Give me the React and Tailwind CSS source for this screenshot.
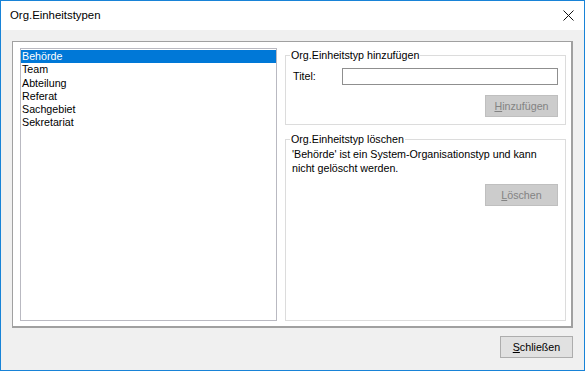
import React from "react";

const items = ["Behörde", "Team", "Abteilung", "Referat", "Sachgebiet", "Sekretariat"];

const Mnemonic = ({ first, rest }) => (
  <span>
    <u className="underline underline-offset-[1px]">{first}</u>
    {rest}
  </span>
);

const DisabledButton = ({ first, rest }) => (
  <button
    disabled
    className="w-[73px] h-[22px] bg-[#cccccc] border border-[#bfbfbf] text-[#838383] text-[10.7px] leading-none flex items-center justify-center"
  >
    <Mnemonic first={first} rest={rest} />
  </button>
);

export default function App() {
  return (
    <div className="w-[585px] h-[371px] border border-[#1883d7] bg-[#f0f0f0] flex flex-col font-['Liberation_Sans',Arial,sans-serif] text-black">
      {/* title bar */}
      <div className="h-[29px] bg-white flex items-center justify-between pl-[9px] pr-[9px] shrink-0">
        <span className="text-[11.4px]">Org.Einheitstypen</span>
        <svg width="11" height="11" viewBox="0 0 11 11" className="mr-[1px]">
          <path d="M0.5 0.5 L10.5 10.5 M10.5 0.5 L0.5 10.5" stroke="#111" strokeWidth="1" />
        </svg>
      </div>

      {/* body */}
      <div className="flex-1 flex flex-col px-[11px] pt-[11px] text-[10.7px]">
        <div className="w-[561px] h-[287px] bg-white border-t border-l border-r-2 border-b-2 border-[#a0a0a0] flex pt-[6px] pl-[7px] gap-[8px]">
          {/* list */}
          <div className="w-[257px] h-[273px] border border-[#b9b9c1] pt-[1px] shrink-0">
            {items.map((it, i) => (
              <div
                key={it}
                className={
                  "leading-[13.3px] h-[13.3px] pl-[1px] " +
                  (i === 0 ? "bg-[#0078d7] text-white" : "")
                }
              >
                {it}
              </div>
            ))}
          </div>

          {/* right column */}
          <div className="w-[281px] flex flex-col">
            <fieldset className="h-[77px] border border-[#dcdcdc] flex flex-col">
              <legend className="ml-[4px] px-[1px] leading-[14px]">Org.Einheitstyp hinzufügen</legend>
              <div className="flex items-center pl-[7px] mt-[6px]">
                <span className="w-[49px]">Titel:</span>
                <div className="w-[216px] h-[17px] border border-[#8f8f8f] bg-white" />
              </div>
              <div className="flex justify-end pr-[7px] mt-[10px]">
                <DisabledButton first="H" rest="inzufügen" />
              </div>
            </fieldset>

            <fieldset className="h-[189px] mt-[7px] border border-[#dcdcdc] flex flex-col">
              <legend className="ml-[4px] px-[1px] leading-[14px]">Org.Einheitstyp löschen</legend>
              <p className="pl-[6px] mt-[2px] leading-[13.5px]">
                'Behörde' ist ein System-Organisationstyp und kann
                <br />
                nicht gelöscht werden.
              </p>
              <div className="flex justify-end pr-[7px] mt-[9px]">
                <DisabledButton first="L" rest="öschen" />
              </div>
            </fieldset>
          </div>
        </div>

        <div className="flex justify-end mt-[8px]">
          <button className="w-[73px] h-[22px] bg-[#e1e1e1] border border-[#adadad] text-[10.7px] leading-none flex items-center justify-center">
            <Mnemonic first="S" rest="chließen" />
          </button>
        </div>
      </div>
    </div>
  );
}
